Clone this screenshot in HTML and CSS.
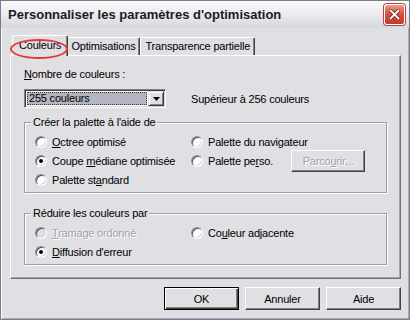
FILE: index.html
```html
<!DOCTYPE html>
<html lang="fr">
<head>
  <meta charset="UTF-8" />
  <title>Personnaliser les paramètres d'optimisation</title>
  <link rel="stylesheet" href="styles.css">
</head>
<body>

  <div class="window">
    <div class="titlebar">
      <span class="title">Personnaliser les paramètres d'optimisation</span>
      <span class="close">
        <svg width="11" height="11" viewBox="0 0 11 11">
          <path d="M1.5 1.5 L9.5 9.5 M9.5 1.5 L1.5 9.5" stroke="#7a2418" stroke-width="3.4" stroke-linecap="square" />
          <path d="M1.5 1.5 L9.5 9.5 M9.5 1.5 L1.5 9.5" stroke="#fff" stroke-width="1.8" stroke-linecap="square" />
        </svg>
      </span>
    </div>

    <div class="client">
      <div class="tabs">
        <div class="tab active">Couleurs<span class="mark"></span></div>
        <div class="tab">Optimisations</div>
        <div class="tab">Transparence partielle</div>
      </div>

      <div class="panel">
        <div class="field-label"><u>N</u>ombre de couleurs :</div>
        <div class="combo-row">
          <div class="combo">
            <span class="combo-value">255 couleurs</span>
            <span class="combo-btn">
              <svg width="7" height="4" viewBox="0 0 7 4"><path d="M0 0 H7 L3.5 4 Z" fill="#000" /></svg>
            </span>
          </div>
          <span class="combo-note">Supérieur à 256 couleurs</span>
        </div>

        <fieldset class="group">
          <legend>Créer la palette à l'aide de</legend>
          <div class="options">
            <div class="option"><span class="radio"></span><span><u>O</u>ctree optimisé</span></div>
            <div class="option"><span class="radio"></span><span>Palette du navi<u>g</u>ateur</span></div>
            <div class="option"><span class="radio checked"></span><span>Coupe <u>m</u>édiane optimisée</span></div>
            <div class="option">
              <span class="radio"></span><span>Palette pe<u>r</u>so.</span>
              <button class="btn browse" disabled>Parco<u>u</u>rir...</button>
            </div>
            <div class="option"><span class="radio"></span><span>Palette st<u>a</u>ndard</span></div>
          </div>
        </fieldset>

        <fieldset class="group second">
          <legend>Réduire les couleurs par</legend>
          <div class="options">
            <div class="option disabled"><span class="radio"></span><span><u>T</u>ramage ordonné</span></div>
            <div class="option"><span class="radio"></span><span>Co<u>u</u>leur adjacente</span></div>
            <div class="option"><span class="radio checked"></span><span><u>D</u>iffusion d'erreur</span></div>
          </div>
        </fieldset>
      </div>

      <div class="buttons">
        <button class="btn default">OK</button>
        <button class="btn">Annuler</button>
        <button class="btn">Aide</button>
      </div>
    </div>
  </div>

</body>
</html>
```

FILE: styles.css
```css
* {
  box-sizing: border-box;
}

body {
  margin: 0;
  font-family: "Liberation Sans", Arial, sans-serif;
  font-size: 11px;
  letter-spacing: -0.2px;
  color: #000;
  background: #fff;
}

u {
  text-underline-offset: 1px;
}

.window {
  width: 410px;
  height: 320px;
  background: #e0dfe3;
  border: 1px solid #7c7c8c;
  box-shadow: inset 1px 1px 0 #fdfdff, inset -1px -1px 0 #a9a9b8;
  display: flex;
  flex-direction: column;
}

/* title bar */
.titlebar {
  height: 27px;
  flex: none;
  display: flex;
  align-items: center;
  justify-content: space-between;
  padding: 0 4px 0 7px;
  background: linear-gradient(#fbfbfd, #ececf1 45%, #d6d6de);
}

.title {
  font-weight: bold;
  font-size: 13px;
  letter-spacing: 0;
  color: #1c1c1c;
}

.close {
  width: 21px;
  height: 21px;
  display: flex;
  align-items: center;
  justify-content: center;
  border-radius: 3px;
  border: 1px solid #fff;
  background: linear-gradient(#ee9c88, #d9553f 45%, #c03a28);
  box-shadow: 0 0 0 1px #b04a3c;
}

/* dialog body */
.client {
  flex: 1;
  padding: 7px 8px 0 9px;
  display: flex;
  flex-direction: column;
}

.tabs {
  display: flex;
  align-items: flex-end;
  padding-left: 4px;
  margin-bottom: -1px;
  position: relative;
  z-index: 2;
}

.tab {
  height: 18px;
  line-height: 16px;
  padding: 0 4px;
  margin-bottom: 1px;
  border: 1px solid;
  border-color: #fff #404040 transparent #fff;
  border-bottom: none;
  border-radius: 2px 2px 0 0;
  box-shadow: inset -1px 0 0 #808080;
  background: #e0dfe3;
}

.tab.active {
  height: 21px;
  line-height: 18px;
  padding: 0 6px;
  margin: 0 -2px;
  position: relative;
  z-index: 3;
}

/* red highlight drawn over the first tab */
.mark {
  position: absolute;
  left: -3px;
  top: 3px;
  width: 58px;
  height: 20px;
  border: 2px solid #e23a3c;
  border-radius: 50%;
}

.panel {
  border: 1px solid;
  border-color: #fff #71706a #71706a #fff;
  box-shadow: inset -1px -1px 0 #a5a4a8;
  padding: 12px 13px 13px 13px;
}

.field-label {
  line-height: 13px;
}

.combo-row {
  display: flex;
  align-items: center;
  margin-top: 8px;
}

.combo {
  width: 142px;
  height: 19px;
  display: flex;
  padding: 1px;
  background: #fff;
  border: 1px solid;
  border-color: #808080 #fff #fff #808080;
  box-shadow: inset 1px 1px 0 #404040, inset -1px -1px 0 #d4d0c8;
}

.combo-value {
  flex: 1;
  margin: 1px;
  padding-left: 1px;
  line-height: 11px;
  background: #b4b6c4;
  border: 1px dotted #303030;
}

.combo-btn {
  width: 16px;
  height: 15px;
  display: flex;
  align-items: center;
  justify-content: center;
  background: #e0dfe3;
  border: 1px solid;
  border-color: #e0dfe3 #404040 #404040 #e0dfe3;
  box-shadow: inset 1px 1px 0 #fff, inset -1px -1px 0 #808080;
}

.combo-note {
  margin-left: 25px;
}

/* group boxes */
.group {
  margin: 8px 0 0;
  padding: 3px 10px 3px 10px;
  border: 1px solid #9d9ca4;
  box-shadow: 1px 1px 0 #fff, inset 1px 1px 0 #fff;
}

.group.second {
  margin-top: 14px;
}

.group legend {
  padding: 0 2px;
  margin-left: -4px;
  line-height: 13px;
  background: #e0dfe3;
}

.options {
  display: grid;
  grid-template-columns: 156px 1fr;
  grid-auto-rows: 19px;
}

.option {
  display: flex;
  align-items: center;
  gap: 5px;
}

.option.disabled {
  color: #a3a2aa;
  text-shadow: 1px 1px 0 #fff;
}

.radio {
  width: 12px;
  height: 12px;
  flex: none;
  position: relative;
  border-radius: 50%;
  background: #fff;
  border: 1px solid;
  border-color: #8c8c94 #fff #fff #8c8c94;
  box-shadow: inset 1px 1px 0 #505058, inset -1px -1px 0 #d8d7dc;
}

.option.disabled .radio {
  background: #e0dfe3;
}

.radio.checked::after {
  content: "";
  position: absolute;
  left: 3px;
  top: 3px;
  width: 4px;
  height: 4px;
  border-radius: 50%;
  background: #000;
}

/* push buttons */
.btn {
  width: 75px;
  height: 23px;
  padding: 0;
  font-family: "Liberation Sans", Arial, sans-serif;
  font-size: 11px;
  letter-spacing: -0.2px;
  color: #000;
  background: #e0dfe3;
  border: 1px solid;
  border-color: #fff #404040 #404040 #fff;
  box-shadow: inset -1px -1px 0 #808080;
}

.btn.default {
  border-color: #000;
  box-shadow: inset 1px 1px 0 #fff, inset -1px -1px 0 #404040, inset -2px -2px 0 #808080;
}

.btn:disabled {
  color: #a3a2aa;
  text-shadow: 1px 1px 0 #fff;
}

.browse {
  width: 74px;
  height: 22px;
  margin-left: 13px;
}

.buttons {
  display: flex;
  justify-content: flex-end;
  gap: 6px;
  margin-top: 8px;
}
```
